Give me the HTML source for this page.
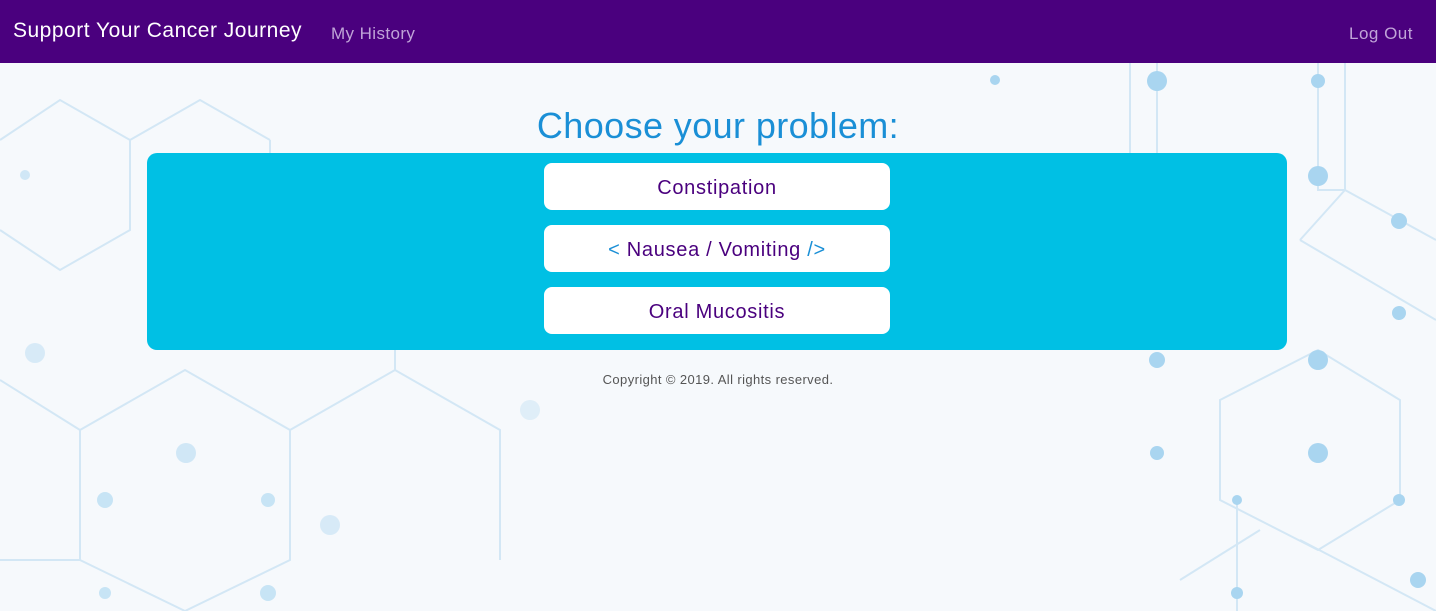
<!DOCTYPE html>
<html><head><meta charset="utf-8"><style>
*{margin:0;padding:0;box-sizing:border-box}
body{width:1436px;height:611px;overflow:hidden;background:#f6f9fc;font-family:"Liberation Sans",sans-serif;position:relative}
.nav{position:absolute;left:0;top:0;width:1436px;height:63px;background:#4a007e;color:#fff}
.brand{position:absolute;left:13px;top:19px;font-size:21px;letter-spacing:.5px}
.hist{position:absolute;left:331px;top:24px;font-size:17px;letter-spacing:.4px;color:#c0a4d8}
.out{position:absolute;right:23px;top:24px;font-size:17px;letter-spacing:.5px;color:#c0a4d8}
svg.bg{position:absolute;left:0;top:63px}
h1{position:absolute;top:105px;left:0;width:1436px;text-align:center;font-weight:normal;font-size:36px;letter-spacing:.4px;color:#1a8fd6}
.box{position:absolute;left:147px;top:153px;width:1140px;height:197px;background:#00c0e4;border-radius:10px}
.btn{position:absolute;left:397px;width:346px;height:47px;background:#fff;border-radius:8px;text-align:center;line-height:50px;font-size:20px;letter-spacing:.7px;color:#4a007e}
.btn span{color:#1a8fd6}
.copy{position:absolute;top:372px;left:0;width:1436px;text-align:center;font-size:13px;letter-spacing:.4px;color:#555}
</style></head><body>
<svg class="bg" width="1436" height="548" viewBox="0 63 1436 548">
<g stroke="#d3e7f5" stroke-width="2" fill="none">
<path d="M80 430 L185 370 L290 430 L290 560 L185 611 M80 430 L80 560 L185 611"/>
<path d="M290 430 L395 370 L500 430 L500 560 M395 370 L395 300"/>
<path d="M0 380 L80 430 M0 560 L80 560"/>
<path d="M0 140 L60 100 L130 140 L130 230 L60 270 L0 230"/>
<path d="M130 140 L200 100 L270 140 M270 140 L270 230"/>
<path d="M1130 63 L1130 350 M1157 63 L1157 350 M1318 63 L1318 190 L1345 190 L1345 63"/>
<path d="M1345 190 L1300 240 M1345 190 L1436 240 M1300 240 L1436 320"/>
<path d="M1220 400 L1318 350 L1400 400 L1400 500 L1318 550 L1220 500 Z"/>
<path d="M1237 500 L1237 611 M1300 540 L1436 611 M1180 580 L1260 530"/>
</g>
<g fill="#a9d5f0">
<circle cx="1157" cy="81" r="10"/><circle cx="1318" cy="81" r="7"/><circle cx="1318" cy="176" r="10"/><circle cx="1399" cy="221" r="8"/>
<circle cx="1399" cy="313" r="7"/><circle cx="1318" cy="360" r="10"/><circle cx="1318" cy="453" r="10"/><circle cx="1157" cy="360" r="8"/><circle cx="1157" cy="453" r="7"/>
<circle cx="1237" cy="500" r="5"/><circle cx="1399" cy="500" r="6"/><circle cx="1237" cy="593" r="6"/><circle cx="1418" cy="580" r="8"/>
<circle cx="186" cy="453" r="10" opacity=".5"/><circle cx="105" cy="500" r="8" opacity=".6"/><circle cx="268" cy="500" r="7" opacity=".6"/><circle cx="268" cy="593" r="8" opacity=".6"/><circle cx="105" cy="593" r="6" opacity=".6"/>
<circle cx="35" cy="353" r="10" opacity=".4"/><circle cx="330" cy="525" r="10" opacity=".4"/><circle cx="530" cy="410" r="10" opacity=".3"/>
<circle cx="995" cy="80" r="5"/><circle cx="25" cy="175" r="5" opacity=".5"/>
</g>
</svg>
<div class="nav"><div class="brand">Support Your Cancer Journey</div><div class="hist">My History</div><div class="out">Log Out</div></div>
<h1>Choose your problem:</h1>
<div class="box">
<div class="btn" style="top:10px">Constipation</div>
<div class="btn" style="top:72px"><span>&lt;</span> Nausea / Vomiting <span>/&gt;</span></div>
<div class="btn" style="top:134px">Oral Mucositis</div>
</div>
<div class="copy">Copyright © 2019. All rights reserved.</div>
</body></html>
